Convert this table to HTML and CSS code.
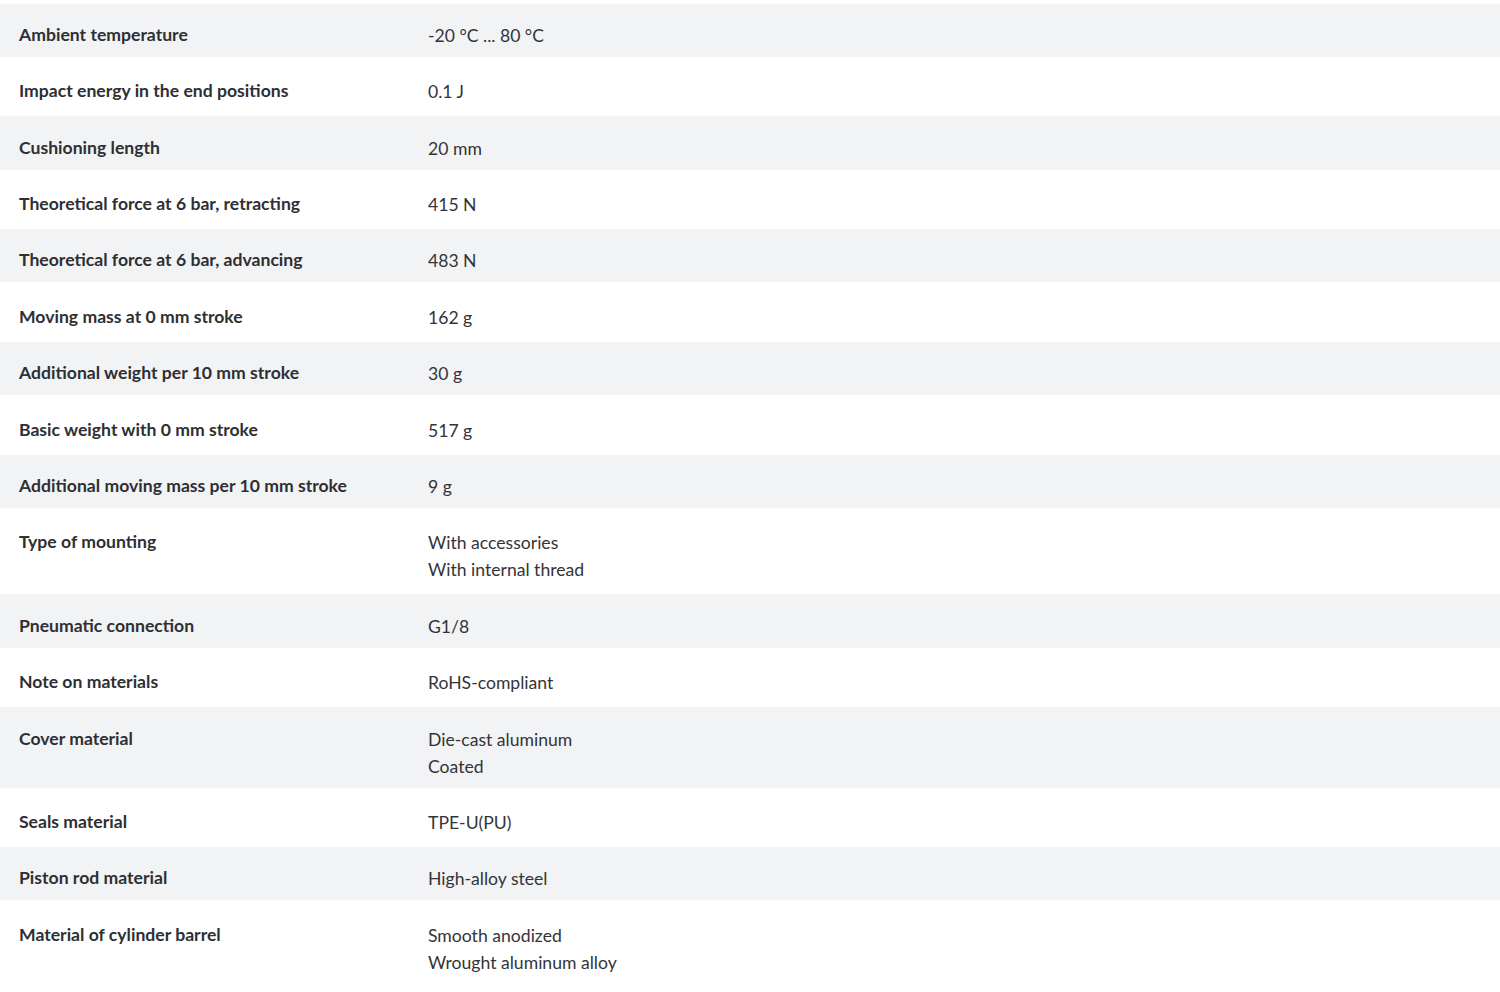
FILE: index.html
```html
<!DOCTYPE html>
<html lang="en">
<head>
<meta charset="utf-8">
<title>Technical data</title>
<link rel="stylesheet" href="styles.css">
</head>
<body>
<div class="specs">
  <div class="row"><div class="label">Ambient temperature</div><div class="value">-20 °C ... 80 °C</div></div>
  <div class="row"><div class="label">Impact energy in the end positions</div><div class="value">0.1 J</div></div>
  <div class="row"><div class="label">Cushioning length</div><div class="value">20 mm</div></div>
  <div class="row"><div class="label">Theoretical force at 6 bar, retracting</div><div class="value">415 N</div></div>
  <div class="row"><div class="label">Theoretical force at 6 bar, advancing</div><div class="value">483 N</div></div>
  <div class="row"><div class="label">Moving mass at 0 mm stroke</div><div class="value">162 g</div></div>
  <div class="row"><div class="label">Additional weight per 10 mm stroke</div><div class="value">30 g</div></div>
  <div class="row"><div class="label">Basic weight with 0 mm stroke</div><div class="value">517 g</div></div>
  <div class="row"><div class="label">Additional moving mass per 10 mm stroke</div><div class="value">9 g</div></div>
  <div class="row"><div class="label">Type of mounting</div><div class="value">With accessories<br>With internal thread</div></div>
  <div class="row"><div class="label">Pneumatic connection</div><div class="value">G1/8</div></div>
  <div class="row"><div class="label">Note on materials</div><div class="value">RoHS-compliant</div></div>
  <div class="row"><div class="label">Cover material</div><div class="value">Die-cast aluminum<br>Coated</div></div>
  <div class="row"><div class="label">Seals material</div><div class="value">TPE-U(PU)</div></div>
  <div class="row"><div class="label">Piston rod material</div><div class="value">High-alloy steel</div></div>
  <div class="row"><div class="label">Material of cylinder barrel</div><div class="value">Smooth anodized<br>Wrought aluminum alloy</div></div>
</div>
</body>
</html>
```
FILE: styles.css
```css
html, body {
  margin: 0;
  padding: 0;
  background: #ffffff;
}

body {
  font-family: Lato, "Open Sans", "Liberation Sans", sans-serif;
  font-size: 17.6px;
  line-height: 27px;
  color: #333333;
}

.specs {
  display: flex;
  flex-direction: column;
  padding-top: 0.5px;
}

.row {
  display: grid;
  grid-template-columns: 409px 1fr;
  padding: 17.4px 0 9px 19px;
  border-top: 3px solid #ffffff;
  background-clip: padding-box;
}

.row:nth-child(odd) {
  background-color: #f2f3f5;
}

.label {
  font-weight: 700;
  color: #2e2f33;
  white-space: nowrap;
}

.value {
  padding-top: 1px;
  margin-bottom: -1px;
  font-weight: 400;
  color: #333438;
  white-space: nowrap;
}
```
